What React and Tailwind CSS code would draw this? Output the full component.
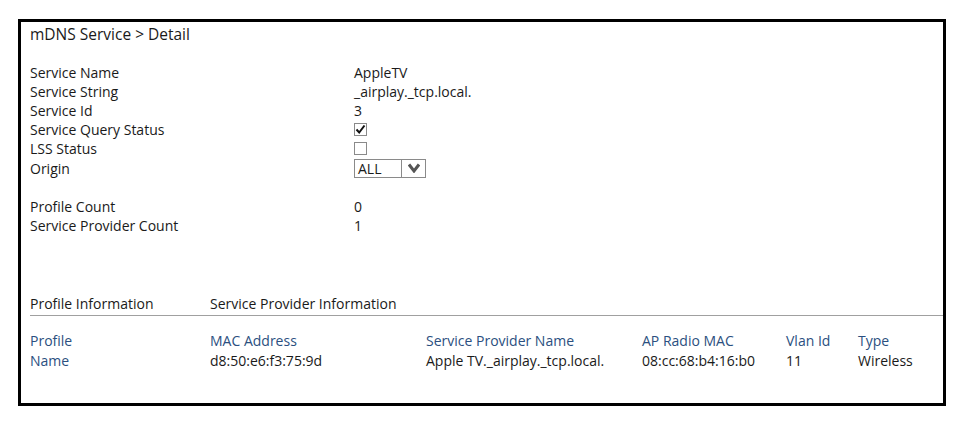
const rows = [
  { label: 'Service Name', value: 'AppleTV' },
  { label: 'Service String', value: '_airplay._tcp.local.' },
  { label: 'Service Id', value: '3' },
];

const Checkbox = ({ checked }) => (
  <div className="w-[13px] h-[13px] border border-[#8a8a8a] bg-white flex items-center justify-center">
    {checked && (
      <svg width="11" height="11" viewBox="0 0 11 11">
        <path d="M1.5 5.5 L4.2 8.5 L9.5 1.5" fill="none" stroke="#111" strokeWidth="2" />
      </svg>
    )}
  </div>
);

const Row = ({ label, children, className = 'h-[19px]' }) => (
  <div className={`flex items-center ${className}`}>
    <div className="w-[324px] shrink-0">{label}</div>
    <div className="flex items-center">{children}</div>
  </div>
);

const App = () => {
  return (
    <div className="w-[966px] h-[438px] bg-white pt-[19px] pl-[18px] text-[14px] text-[#1a1a1a] font-['Open_Sans','Noto_Sans',sans-serif]">
      <div className="w-[928px] h-[387px] border-[3px] border-black flex flex-col pl-[9px] leading-[19px]">
        <div className="mt-[2px] text-[15.5px] leading-[20px]">mDNS Service &gt; Detail</div>

        <div className="mt-[19px] flex flex-col">
          {rows.map((r) => (
            <Row key={r.label} label={r.label}>{r.value}</Row>
          ))}
          <Row label="Service Query Status"><Checkbox checked /></Row>
          <Row label="LSS Status"><Checkbox /></Row>
          <Row label="Origin" className="h-[20px]">
            <div className="w-[72px] h-[19px] border border-[#8a8a8a] flex items-stretch">
              <div className="w-[47px] pl-[3px] flex items-center border-r border-[#8a8a8a]">ALL</div>
              <div className="flex-1 flex items-center justify-center">
                <svg width="12" height="10" viewBox="0 0 12 10">
                  <path d="M1 1.5 L6 8 L11 1.5" fill="none" stroke="#555" strokeWidth="3" />
                </svg>
              </div>
            </div>
          </Row>
        </div>

        <div className="mt-[19px] flex flex-col">
          <Row label="Profile Count">0</Row>
          <Row label="Service Provider Count">1</Row>
        </div>

        <div className="mt-[59px] flex">
          <div className="w-[180px]">Profile Information</div>
          <div>Service Provider Information</div>
        </div>
        <div className="mt-[2px] h-px bg-[#a0a0a0]" />

        <div className="mt-[15px] grid grid-cols-[180px_216px_216px_144px_72px_1fr] leading-[20px]">
          <div className="text-[#2b4f80]">Profile</div>
          <div className="text-[#2b4f80]">MAC Address</div>
          <div className="text-[#2b4f80]">Service Provider Name</div>
          <div className="text-[#2b4f80]">AP Radio MAC</div>
          <div className="text-[#2b4f80]">Vlan Id</div>
          <div className="text-[#2b4f80]">Type</div>
          <div className="text-[#2b4f80]">Name</div>
          <div>d8:50:e6:f3:75:9d</div>
          <div>Apple TV._airplay._tcp.local.</div>
          <div>08:cc:68:b4:16:b0</div>
          <div>11</div>
          <div>Wireless</div>
        </div>
      </div>
    </div>
  );
};

export default App;
